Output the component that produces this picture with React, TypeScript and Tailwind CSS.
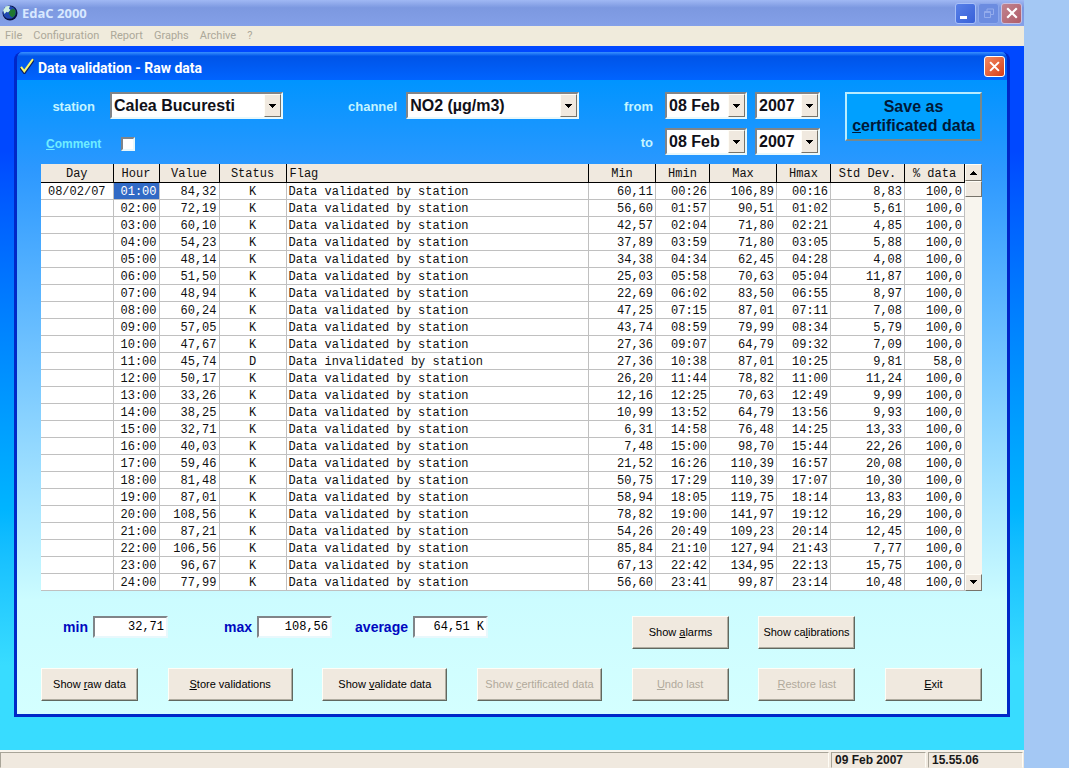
import { useState, type ReactNode } from 'react'

type Align = 'left' | 'center' | 'right'

interface Column {
  title: string
  width: string
  align: Align
}

const COLUMNS: Column[] = [
  { title: 'Day', width: 'w-[72px]', align: 'center' },
  { title: 'Hour', width: 'w-[46px]', align: 'right' },
  { title: 'Value', width: 'w-[60px]', align: 'right' },
  { title: 'Status', width: 'w-[67px]', align: 'center' },
  { title: 'Flag', width: 'w-auto', align: 'left' },
  { title: 'Min', width: 'w-[67px]', align: 'right' },
  { title: 'Hmin', width: 'w-[54px]', align: 'right' },
  { title: 'Max', width: 'w-[67px]', align: 'right' },
  { title: 'Hmax', width: 'w-[54px]', align: 'right' },
  { title: 'Std Dev.', width: 'w-[74px]', align: 'right' },
  { title: '% data', width: 'w-[60px]', align: 'right' },
]

const ALIGN: Record<Align, string> = {
  left: 'text-left',
  center: 'text-center',
  right: 'text-right',
}

const VALID = 'Data validated by station'
const INVALID = 'Data invalidated by station'

const ROWS: string[][] = [
  ['08/02/07', '01:00', '84,32', 'K', VALID, '60,11', '00:26', '106,89', '00:16', '8,83', '100,0'],
  ['', '02:00', '72,19', 'K', VALID, '56,60', '01:57', '90,51', '01:02', '5,61', '100,0'],
  ['', '03:00', '60,10', 'K', VALID, '42,57', '02:04', '71,80', '02:21', '4,85', '100,0'],
  ['', '04:00', '54,23', 'K', VALID, '37,89', '03:59', '71,80', '03:05', '5,88', '100,0'],
  ['', '05:00', '48,14', 'K', VALID, '34,38', '04:34', '62,45', '04:28', '4,08', '100,0'],
  ['', '06:00', '51,50', 'K', VALID, '25,03', '05:58', '70,63', '05:04', '11,87', '100,0'],
  ['', '07:00', '48,94', 'K', VALID, '22,69', '06:02', '83,50', '06:55', '8,97', '100,0'],
  ['', '08:00', '60,24', 'K', VALID, '47,25', '07:15', '87,01', '07:11', '7,08', '100,0'],
  ['', '09:00', '57,05', 'K', VALID, '43,74', '08:59', '79,99', '08:34', '5,79', '100,0'],
  ['', '10:00', '47,67', 'K', VALID, '27,36', '09:07', '64,79', '09:32', '7,09', '100,0'],
  ['', '11:00', '45,74', 'D', INVALID, '27,36', '10:38', '87,01', '10:25', '9,81', '58,0'],
  ['', '12:00', '50,17', 'K', VALID, '26,20', '11:44', '78,82', '11:00', '11,24', '100,0'],
  ['', '13:00', '33,26', 'K', VALID, '12,16', '12:25', '70,63', '12:49', '9,99', '100,0'],
  ['', '14:00', '38,25', 'K', VALID, '10,99', '13:52', '64,79', '13:56', '9,93', '100,0'],
  ['', '15:00', '32,71', 'K', VALID, '6,31', '14:58', '76,48', '14:25', '13,33', '100,0'],
  ['', '16:00', '40,03', 'K', VALID, '7,48', '15:00', '98,70', '15:44', '22,26', '100,0'],
  ['', '17:00', '59,46', 'K', VALID, '21,52', '16:26', '110,39', '16:57', '20,08', '100,0'],
  ['', '18:00', '81,48', 'K', VALID, '50,75', '17:29', '110,39', '17:07', '10,30', '100,0'],
  ['', '19:00', '87,01', 'K', VALID, '58,94', '18:05', '119,75', '18:14', '13,83', '100,0'],
  ['', '20:00', '108,56', 'K', VALID, '78,82', '19:00', '141,97', '19:12', '16,29', '100,0'],
  ['', '21:00', '87,21', 'K', VALID, '54,26', '20:49', '109,23', '20:14', '12,45', '100,0'],
  ['', '22:00', '106,56', 'K', VALID, '85,84', '21:10', '127,94', '21:43', '7,77', '100,0'],
  ['', '23:00', '96,67', 'K', VALID, '67,13', '22:42', '134,95', '22:13', '15,75', '100,0'],
  ['', '24:00', '77,99', 'K', VALID, '56,60', '23:41', '99,87', '23:14', '10,48', '100,0'],
]

const MENU = ['File', 'Configuration', 'Report', 'Graphs', 'Archive', '?']

const raised =
  'border border-t-[#fffdf6] border-l-[#fffdf6] border-r-[#77736a] border-b-[#77736a] bg-[#f0e9df]'

const sunken =
  'border-2 border-t-[#808488] border-l-[#808488] border-r-[#e8f8fc] border-b-[#e8f8fc] bg-white'

function Arrow({ up = false }: { up?: boolean }) {
  return (
    <svg viewBox="0 0 7 4" className="h-1 w-[7px]" shapeRendering="crispEdges" aria-hidden>
      <path d={up ? 'M3 0h1v1h1v1h1v1h1v1H0V3h1V2h1V1h1z' : 'M0 0h7v1H6v1H5v1H4v1H3V3H2V2H1V1H0z'} />
    </svg>
  )
}

function Cross({ className }: { className: string }) {
  return (
    <svg viewBox="0 0 12 12" className={className} fill="none" stroke="#fff" strokeWidth="2.2" aria-hidden>
      <path d="M1.2 1.2l9.6 9.6M10.8 1.2l-9.6 9.6" />
    </svg>
  )
}

function Combo({ id, label, value, width }: { id: string; label?: string; value: string; width: string }) {
  return (
    <div className={`relative h-[27px] ${width}`}>
      <select
        id={id}
        aria-label={label}
        defaultValue={value}
        className={`h-full w-full appearance-none pt-px pl-[2px] text-base leading-5 font-bold text-[#101018] ${sunken}`}
      >
        <option>{value}</option>
      </select>
      <span
        className={`pointer-events-none absolute top-[2px] right-[2px] bottom-[2px] flex w-[17px] items-center justify-center ${raised}`}
      >
        <Arrow />
      </span>
    </div>
  )
}

// The letter at `hot` is the keyboard accelerator and is drawn underlined.
function Hot({ text, hot }: { text: string; hot: number }) {
  return (
    <span>
      {text.slice(0, hot)}
      <span className="underline">{text[hot]}</span>
      {text.slice(hot + 1)}
    </span>
  )
}

function PushButton({
  text,
  hot,
  wide = false,
  disabled = false,
}: {
  text: string
  hot: number
  wide?: boolean
  disabled?: boolean
}) {
  return (
    <button
      type="button"
      disabled={disabled}
      className={`h-[33px] border border-t-[#fffdf6] border-r-[#606860] border-b-[#606860] border-l-[#fffdf6] bg-[#f0e9df] text-[11px] leading-4 whitespace-nowrap text-black shadow-[inset_-1px_-1px_0_#b0aca0] disabled:text-[#b0aa9c] ${wide ? 'w-[125px]' : 'w-[97px]'}`}
    >
      <Hot text={text} hot={hot} />
    </button>
  )
}

function Total({ id, label, value, width }: { id: string; label: string; value: string; width: string }) {
  return (
    <div className="flex items-center gap-[5px]">
      <label htmlFor={id} className={`text-right text-sm leading-5 font-bold text-[#0008c0] ${width}`}>
        {label}
      </label>
      <input
        id={id}
        readOnly
        value={value}
        className={`h-[22px] w-[75px] pr-[2px] text-right font-['Liberation_Mono',monospace] text-xs text-black ${sunken}`}
      />
    </div>
  )
}

function Panel({ children, className }: { children?: ReactNode; className: string }) {
  return (
    <div
      className={`h-4 border border-t-[#a8a498] border-l-[#a8a498] border-r-[#fffdf6] border-b-[#f0e9df] pl-[3px] leading-[14px] ${className}`}
    >
      {children}
    </div>
  )
}

function Grid() {
  const [selected, setSelected] = useState(0)

  return (
    <div className="mt-[9px] flex">
      <table className="min-w-0 flex-1 table-fixed border-collapse bg-white font-['Liberation_Mono',monospace] text-xs leading-[14px] text-[#101010]">
        <thead>
          <tr className="h-[18px] bg-[#f0e9df]">
            {COLUMNS.map((c) => (
              <th
                key={c.title}
                className={`border-r border-b border-black px-[3px] pt-[2px] pb-0 font-normal ${c.width} ${c.align === 'left' ? 'text-left' : 'text-center'}`}
              >
                {c.title}
              </th>
            ))}
          </tr>
        </thead>
        <tbody>
          {ROWS.map((row, i) => (
            <tr key={row[1]} className="h-[17px]" onClick={() => setSelected(i)}>
              {row.map((cell, j) => (
                <td
                  key={COLUMNS[j].title}
                  className={`border-r border-b border-[#c0c0c0] px-[2px] pt-[2px] pb-0 ${ALIGN[COLUMNS[j].align]} ${
                    j === 1 && i === selected ? 'bg-[#316ac5] text-white' : ''
                  }`}
                >
                  {cell}
                </td>
              ))}
            </tr>
          ))}
        </tbody>
      </table>

      <div className="flex w-[17px] flex-col bg-[#f8f5ee]">
        <button type="button" aria-label="Scroll up" className={`flex h-[17px] items-center justify-center ${raised}`}>
          <Arrow up />
        </button>
        <div className={`h-4 ${raised}`} />
        <button
          type="button"
          aria-label="Scroll down"
          className={`mt-auto flex h-[17px] items-center justify-center ${raised}`}
        >
          <Arrow />
        </button>
      </div>
    </div>
  )
}

function ValidationWindow() {
  const label = 'pt-[2px] text-right text-[13px] font-bold text-[#c4f4ff]'

  return (
    <section className="mx-[14px] overflow-hidden rounded-t-lg border-x-[3px] border-b-[3px] border-[#0028c8]">
      <header className="flex h-7 items-center bg-linear-to-b from-[#3890ff] via-[#0054e8] via-15% to-[#0064ff] pr-[2px] pl-[3px]">
        <svg viewBox="0 0 14 16" className="h-4 w-[14px]" aria-hidden>
          <path d="M.5 9.500l3.900 5L13.500 1.500" fill="none" stroke="#102060" strokeWidth="3" />
          <path d="M1 8.800l3.300 4.400L13 1.200" fill="none" stroke="#f8f870" strokeWidth="2" />
        </svg>
        <h1 className="ml-1 pt-[3px] font-['Roboto',sans-serif] text-sm leading-5 font-bold text-white">
          Data validation - Raw data
        </h1>
        <button
          type="button"
          aria-label="Close"
          className="ml-auto flex size-[21px] items-center justify-center rounded-[3px] border border-white bg-linear-to-br from-[#f08860] to-[#d83c10]"
        >
          <Cross className="size-[11px]" />
        </button>
      </header>

      <div className="bg-[linear-gradient(to_bottom,#0094ff,#2c98ff_14%,#ccfcff_82%,#d4ffff)] pt-3 pr-[25px] pb-[13px] pl-6">
        <form className="flex items-start">
          <div className="grid grid-cols-[54px_173px] items-center gap-x-[15px] gap-y-[9px]">
            <label htmlFor="station" className={label}>
              station
            </label>
            <Combo id="station" value="Calea Bucuresti" width="w-[173px]" />
            <label htmlFor="comment" className="pt-1 pl-[5px] text-xs font-bold text-[#70ecff]">
              <Hot text="Comment" hot={0} />
            </label>
            <div className="flex h-[27px] items-center pt-1 pl-[11px]">
              <input id="comment" type="checkbox" className={`size-[14px] appearance-none ${sunken}`} />
            </div>
          </div>

          <div className="ml-[65px] flex items-center gap-[9px]">
            <label htmlFor="channel" className={label}>
              channel
            </label>
            <Combo id="channel" value="NO2 (µg/m3)" width="w-[173px]" />
          </div>

          <div className="ml-auto grid grid-cols-[auto_82px_65px] items-center gap-x-2 gap-y-[9px]">
            <label htmlFor="from-day" className={`pr-1 ${label}`}>
              from
            </label>
            <Combo id="from-day" value="08 Feb" width="w-[82px]" />
            <Combo id="from-year" label="from year" value="2007" width="w-[65px]" />
            <label htmlFor="to-day" className={`pr-1 ${label}`}>
              to
            </label>
            <Combo id="to-day" value="08 Feb" width="w-[82px]" />
            <Combo id="to-year" label="to year" value="2007" width="w-[65px]" />
          </div>

          <button
            type="button"
            className="ml-[25px] h-[49px] w-[137px] border-2 border-t-[#b8ecff] border-r-[#78888c] border-b-[#78888c] border-l-[#b8ecff] bg-[#00a0ff] pb-[2px] text-base leading-[19px] font-bold whitespace-nowrap text-[#001838]"
          >
            Save as
            <br />
            <Hot text="certificated data" hot={0} />
          </button>
        </form>

        <Grid />

        <div className="mt-[25px] flex items-start">
          <Total id="min" label="min" value="32,71" width="w-[47px]" />
          <Total id="max" label="max" value="108,56" width="w-[84px]" />
          <Total id="average" label="average" value="64,51 K" width="w-[76px]" />
          <div className="mr-[127px] ml-auto flex gap-[29px]">
            <PushButton text="Show alarms" hot={5} />
            <PushButton text="Show calibrations" hot={7} />
          </div>
        </div>

        <div className="mt-[19px] flex justify-between">
          <PushButton text="Show raw data" hot={5} />
          <PushButton text="Store validations" hot={0} wide />
          <PushButton text="Show validate data" hot={5} wide />
          <PushButton text="Show certificated data" hot={5} wide disabled />
          <PushButton text="Undo last" hot={0} disabled />
          <PushButton text="Restore last" hot={0} disabled />
          <PushButton text="Exit" hot={0} />
        </div>
      </div>
    </section>
  )
}

export default function App() {
  return (
    <div className="min-h-screen bg-[#a4c8f4] pr-[45px] font-['Liberation_Sans',Arial,sans-serif]">
      <div className="flex min-h-screen flex-col">
        <header className="flex h-[26px] items-center gap-[2px] bg-linear-to-b from-[#a0b8f4] via-[#7c98e0] via-30% to-[#84a0e8] pr-[2px] pl-[2px]">
          <svg viewBox="0 0 16 16" className="size-4" aria-hidden>
            <circle cx="8" cy="8" r="7.5" fill="#081040" />
            <circle cx="7.4" cy="7.4" r="6.4" fill="#2048b0" />
            <path d="M1 5l3-3.800 4-.4-1 3 1.600 1.200L6 7.400l-1.400-.6L2.400 9z" fill="#d0f0e0" />
            <path d="M8 5.400l3-1.800 2.600 2-.4 4.400-2.800 2.600-2-1.600-1.600-2.400z" fill="#207830" />
          </svg>
          <span className="mr-auto ml-[2px] pt-px font-['Open_Sans',sans-serif] text-[13px] font-bold text-[#d8e8ff]">
            EdaC 2000
          </span>
          <button
            type="button"
            aria-label="Minimize"
            className="flex size-[21px] items-end rounded-[3px] border border-[#a8c0f8] bg-linear-to-br from-[#5880e8] to-[#3860d8] pb-1 pl-1"
          >
            <span className="h-[3px] w-[7px] bg-white" />
          </button>
          <button
            type="button"
            aria-label="Restore"
            disabled
            className="flex size-[21px] items-center justify-center rounded-[3px] border border-[#8ca8ec] bg-[#6c8ce0]"
          >
            <svg viewBox="0 0 10 10" className="size-[10px]" fill="none" stroke="#94acec" aria-hidden>
              <path d="M3 3V1h6.5v5.500H7M.5 3.500h6v6h-6zM.5 4.500h6" />
            </svg>
          </button>
          <button
            type="button"
            aria-label="Close application"
            className="flex size-[21px] items-center justify-center rounded-[3px] border border-[#c8c0e0] bg-linear-to-br from-[#c08490] to-[#b05c68]"
          >
            <Cross className="size-3" />
          </button>
        </header>

        <nav className="flex h-5 items-center gap-[11px] bg-[#f0ebdc] pl-[5px] font-['Roboto',sans-serif] text-[11px] text-[#aca899]">
          {MENU.map((item) => (
            <a key={item} href="#">
              {item}
            </a>
          ))}
        </nav>

        <main className="flex-1 bg-linear-to-b from-[#0048ff] from-15% to-[#38dcff] to-88% pt-[6px]">
          <ValidationWindow />
        </main>

        <footer className="flex h-[18px] gap-[2px] border-t-2 border-[#f8f4ec] bg-[#f0e9df] pr-px text-xs font-bold text-[#181818]">
          <Panel className="flex-1" />
          <Panel className="w-[95px]">09 Feb 2007</Panel>
          <Panel className="w-[95px]">15.55.06</Panel>
        </footer>
      </div>
    </div>
  )
}
